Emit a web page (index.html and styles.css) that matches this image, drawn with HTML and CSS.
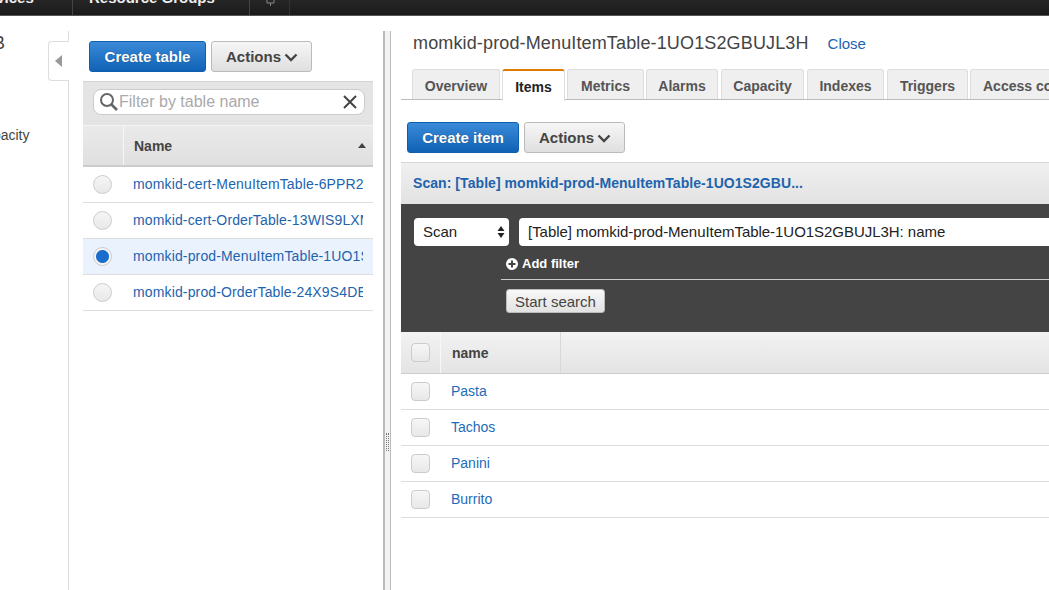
FILE: index.html
```html
<!DOCTYPE html>
<html lang="en">
<head>
    <meta charset="UTF-8">
    <title>DynamoDB</title>
    <link rel="stylesheet" href="styles.css">
</head>
<body>
<div class="topbar">
    <span class="topbar-item first">Services</span>
    <span class="topbar-item">Resource Groups</span>
    <span class="topbar-pin">
        <svg width="9" height="6" viewBox="0 0 9 6"><path d="M1 0v3h7V0M4.500 3v3" fill="none" stroke="#888"/></svg>
    </span>
</div>
<div class="main">
    <div class="nav">
        <div class="nav-db">DB</div>
        <div class="nav-cap">Capacity</div>
        <div class="collapse"><span class="collapse-arrow"></span></div>
    </div>

    <div class="tables">
        <div class="btn-row">
            <button class="btn btn-primary btn-table">Create table</button>
            <button class="btn btn-actions">Actions
                <svg class="chev" width="14" height="9" viewBox="0 0 14 9"><path d="M1.500 1.500L7 7l5.500-5.500" fill="none" stroke="#444" stroke-width="2.400"/></svg>
            </button>
        </div>
        <div class="filter-strip">
            <div class="filter">
                <svg class="search-icon" width="20" height="20" viewBox="0 0 20 20"><circle cx="8" cy="8" r="6" fill="none" stroke="#666" stroke-width="2"/><path d="M12.500 12.500L18 18" stroke="#666" stroke-width="2.600"/></svg>
                <span class="filter-text">Filter by table name</span>
                <svg class="clear-icon" width="14" height="14" viewBox="0 0 14 14"><path d="M1 1l12 12M13 1L1 13" stroke="#444" stroke-width="2"/></svg>
            </div>
        </div>
        <div class="tables-head">
            <div class="head-radio"></div>
            <div class="head-name">Name<span class="sort"></span></div>
        </div>
        <div class="table-row"><span class="radio"></span><a class="table-link">momkid-cert-MenuItemTable-6PPR2MFKJ3</a></div>
        <div class="table-row"><span class="radio"></span><a class="table-link">momkid-cert-OrderTable-13WIS9LXMPQ</a></div>
        <div class="table-row selected"><span class="radio checked"></span><a class="table-link">momkid-prod-MenuItemTable-1UO1S2GBUJL3H</a></div>
        <div class="table-row"><span class="radio"></span><a class="table-link">momkid-prod-OrderTable-24X9S4DEF7K</a></div>
    </div>

    <div class="splitter"><span class="grip"></span></div>

    <div class="detail">
        <div class="title-row">
            <span class="title">momkid-prod-MenuItemTable-1UO1S2GBUJL3H</span>
            <a class="close">Close</a>
        </div>
        <div class="tabs">
            <span class="tab t-overview">Overview</span>
            <span class="tab active t-items">Items</span>
            <span class="tab t-metrics">Metrics</span>
            <span class="tab t-alarms">Alarms</span>
            <span class="tab t-capacity">Capacity</span>
            <span class="tab t-indexes">Indexes</span>
            <span class="tab t-triggers">Triggers</span>
            <span class="tab t-access">Access control</span>
        </div>
        <div class="btn-row items-btns">
            <button class="btn btn-primary btn-item">Create item</button>
            <button class="btn btn-actions">Actions
                <svg class="chev" width="14" height="9" viewBox="0 0 14 9"><path d="M1.500 1.500L7 7l5.500-5.500" fill="none" stroke="#444" stroke-width="2.400"/></svg>
            </button>
        </div>
        <div class="scan-bar">Scan: [Table] momkid-prod-MenuItemTable-1UO1S2GBU...</div>
        <div class="scan-panel">
            <div class="scan-controls">
                <div class="select"><span class="select-text">Scan</span>
                    <svg width="8" height="14" viewBox="0 0 8 14"><path d="M4 1l3.500 5h-7zM4 13L.5 8h7z" fill="#222"/></svg>
                </div>
                <div class="scan-input">[Table] momkid-prod-MenuItemTable-1UO1S2GBUJL3H: name</div>
            </div>
            <div class="add-filter">
                <svg width="12" height="12" viewBox="0 0 12 12"><circle cx="6" cy="6" r="6" fill="#fff"/><path d="M6 2.500v7M2.500 6h7" stroke="#444" stroke-width="2"/></svg>
                Add filter
            </div>
            <div class="scan-start">
                <button class="btn-search">Start search</button>
            </div>
        </div>
        <div class="items-head">
            <div class="items-check"><span class="check"></span></div>
            <div class="items-name">name</div>
        </div>
        <div class="item-row"><div class="items-check"><span class="check"></span></div><a class="item-link">Pasta</a></div>
        <div class="item-row"><div class="items-check"><span class="check"></span></div><a class="item-link">Tachos</a></div>
        <div class="item-row"><div class="items-check"><span class="check"></span></div><a class="item-link">Panini</a></div>
        <div class="item-row"><div class="items-check"><span class="check"></span></div><a class="item-link">Burrito</a></div>
    </div>
</div>
</body>
</html>
```

FILE: styles.css
```css
* {
    padding: 0;
    margin: 0;
    box-sizing: border-box;
}

html, body {
    width: 1049px;
    height: 590px;
    overflow: hidden;
    background: #fff;
    font-family: "Liberation Sans", Arial, sans-serif;
    color: #444;
}

button {
    font-family: inherit;
}

/* top bar, cut off by the screenshot */
.topbar {
    height: 16px;
    background: linear-gradient(#262626, #1a1a1a);
    border-bottom: 1px solid #555;
    display: flex;
    align-items: flex-start;
    overflow: hidden;
    color: #eee;
    font-size: 15px;
    font-weight: bold;
}

.topbar-item {
    display: block;
    height: 29px;
    margin-top: -14px;
    line-height: 24px;
    padding: 0 34px 0 16px;
    border-right: 1px solid #444;
    white-space: nowrap;
}

.topbar-item.first {
    width: 73px;
    padding: 0;
    text-indent: -28px;
    overflow: hidden;
}

.topbar-pin {
    width: 40px;
    height: 15px;
    padding-left: 16px;
    border-right: 1px solid #333;
    line-height: 0;
}

.main {
    display: flex;
    height: 574px;
}

/* left nav */
.nav {
    width: 69px;
    flex: none;
    position: relative;
    margin-top: 15px;
    border-right: 1px solid #ddd;
    font-size: 14px;
    color: #444;
}

.nav-db {
    margin-left: -20px;
    font-size: 18px;
    line-height: 20px;
    margin-top: 2px;
}

.nav-cap {
    margin-left: -25px;
    line-height: 20px;
    margin-top: 72px;
}

.collapse {
    position: absolute;
    left: 48px;
    top: 10px;
    width: 21px;
    height: 40px;
    background: #fff;
    border: 1px solid #ddd;
    border-right: 0;
    border-radius: 4px 0 0 4px;
    display: flex;
    align-items: center;
    justify-content: center;
}

.collapse-arrow {
    border-right: 7px solid #999;
    border-top: 6px solid transparent;
    border-bottom: 6px solid transparent;
    margin-right: 2px;
}

/* tables pane */
.tables {
    width: 314px;
    flex: none;
    padding: 25px 10px 0 14px;
}

.btn-row {
    display: flex;
    gap: 5px;
    padding-left: 6px;
}

.btn {
    height: 31px;
    border-radius: 3px;
    font-size: 15px;
    font-weight: bold;
    display: flex;
    align-items: center;
    justify-content: center;
}

.btn-primary {
    color: #fff;
    background: linear-gradient(#3a8ad8, #0f62b5);
    border: 1px solid #0f5fae;
    text-shadow: 0 0 1px rgba(0, 0, 0, .4);
}

.btn-table {
    width: 117px;
}

.btn-item {
    width: 112px;
}

.btn-actions {
    width: 101px;
    padding-left: 1px;
    color: #444;
    background: linear-gradient(#f6f6f6, #dfdfdf);
    border: 1px solid #bbb;
    gap: 3px;
}

.chev {
    margin-top: 2px;
}

.filter-strip {
    height: 44px;
    margin-top: 9px;
    padding: 7px 8px 0 10px;
    background: #e4e4e4;
    border-top: 1px solid #d5d5d5;
}

.filter {
    height: 26px;
    background: #fff;
    border: 1px solid #ccc;
    border-radius: 8px;
    display: flex;
    align-items: center;
    padding: 0 7px 0 5px;
    font-size: 16px;
}

.search-icon {
    flex: none;
}

.filter-text {
    flex: 1;
    color: #aaa;
    margin-bottom: 1px;
}

.tables-head {
    height: 42px;
    display: flex;
    background: linear-gradient(#eaeaea, #e0e0e0);
    border-top: 1px solid #f4f4f4;
    border-bottom: 2px solid #ccc;
    font-size: 14px;
    font-weight: bold;
}

.head-radio {
    width: 41px;
    border-right: 1px solid #f6f6f6;
}

.head-name {
    flex: 1;
    display: flex;
    align-items: center;
    justify-content: space-between;
    padding: 0 7px 0 10px;
}

.sort {
    border-bottom: 5px solid #444;
    border-left: 4px solid transparent;
    border-right: 4px solid transparent;
}

.table-row {
    height: 36px;
    display: flex;
    align-items: center;
    border-bottom: 1px solid #ddd;
    padding-right: 10px;
}

.table-row.selected {
    background: #eaf3fd;
}

.radio {
    width: 19px;
    height: 19px;
    flex: none;
    margin: 0 21px 0 10px;
    border-radius: 50%;
    border: 1px solid #ccc;
    background: linear-gradient(#f6f6f6, #e8e8e8);
}

.radio.checked {
    background: radial-gradient(circle, #1a6ecb 0, #1a6ecb 6px, #f4f4f4 7px);
}

.table-link {
    font-size: 14px;
    letter-spacing: .14px;
    color: #1e63ad;
    white-space: nowrap;
    overflow: hidden;
    margin-bottom: 2px;
}

/* drag bar between the panes */
.splitter {
    width: 8px;
    flex: none;
    margin-top: 15px;
    background: #f2f2f2;
    border-left: 2px solid #bbb;
    border-right: 1px solid #bbb;
    position: relative;
}

.grip {
    position: absolute;
    left: 1px;
    top: 402px;
    height: 18px;
    width: 3px;
    border-left: 1px dotted #777;
    border-right: 1px dotted #777;
}

/* details pane */
.detail {
    flex: 1;
    min-width: 0;
    padding: 0 0 0 10px;
    overflow: hidden;
}

.title-row {
    height: 54px;
    display: flex;
    align-items: center;
    padding: 0 0 0 12px;
    margin-bottom: -1px;
    gap: 19px;
}

.title {
    font-size: 18px;
    letter-spacing: .14px;
    color: #444;
    white-space: nowrap;
}

.close {
    font-size: 15px;
    color: #1e63ad;
}

.tabs {
    height: 31px;
    display: flex;
    gap: 2px;
    padding-left: 11px;
    border-bottom: 1px solid #bbb;
    white-space: nowrap;
}

.tab {
    flex: none;
    height: 30px;
    text-align: center;
    font-size: 14px;
    font-weight: bold;
    line-height: 32px;
    color: #555;
    background: #efefef;
    border: 1px solid #ddd;
    border-bottom: 0;
    border-radius: 3px 3px 0 0;
}

.tab.active {
    height: 32px;
    color: #222;
    background: #fff;
    border-top: 2px solid #e07b00;
    border-bottom: 0;
    line-height: 33px;
}

.t-overview { width: 88px; }
.t-items { width: 63px; }
.t-metrics { width: 77px; }
.t-alarms { width: 72px; margin-right: 1px; }
.t-capacity { width: 83px; margin-right: 1px; }
.t-indexes { width: 77px; margin-right: 1px; }
.t-triggers { width: 81px; }
.t-access { width: 120px; text-align: left; padding-left: 12px; }

.items-btns {
    padding-left: 6px;
    padding-top: 22px;
    height: 62px;
}

.scan-bar {
    height: 42px;
    padding-left: 12px;
    background: linear-gradient(#f0f0f0, #e2e2e2);
    border-top: 1px solid #d5d5d5;
    font-size: 14px;
    letter-spacing: .06px;
    font-weight: bold;
    line-height: 41px;
    color: #1e63ad;
    white-space: nowrap;
}

.scan-panel {
    height: 128px;
    background: #444;
    padding-top: 14px;
}

.scan-controls {
    display: flex;
    gap: 10px;
    padding-left: 13px;
    height: 28px;
}

.select {
    width: 95px;
    flex: none;
    background: #fff;
    border-radius: 4px;
    display: flex;
    align-items: center;
    justify-content: space-between;
    padding: 0 4px 0 9px;
    font-size: 15px;
    color: #222;
}

.select-text {
    margin-bottom: 2px;
}

.scan-input {
    flex: 1;
    background: #fff;
    border-radius: 4px 0 0 4px;
    padding-left: 9px;
    font-size: 15px;
    letter-spacing: -.04px;
    line-height: 28px;
    color: #222;
    white-space: nowrap;
}

.add-filter {
    height: 34px;
    margin-left: 100px;
    padding: 2px 0 0 5px;
    border-bottom: 1px solid #ccc;
    display: flex;
    align-items: center;
    gap: 4px;
    font-size: 13px;
    font-weight: bold;
    color: #fff;
}

.scan-start {
    padding: 9px 0 0 105px;
}

.btn-search {
    width: 99px;
    height: 24px;
    padding-top: 1px;
    font-size: 15px;
    color: #444;
    background: linear-gradient(#f8f8f8, #e2e2e2);
    border: 1px solid #bbb;
    border-radius: 3px;
}

.items-head {
    height: 42px;
    display: flex;
    background: linear-gradient(#f2f2f2, #e4e4e4);
    border-bottom: 1px solid #ccc;
}

.items-check {
    width: 40px;
    flex: none;
    display: flex;
    align-items: center;
    padding-left: 10px;
}

.items-head .items-check {
    border-right: 1px solid #f8f8f8;
}

.items-name {
    width: 120px;
    padding-left: 11px;
    border-right: 1px solid #d8d8d8;
    font-size: 14px;
    font-weight: bold;
    line-height: 43px;
}

.check {
    width: 19px;
    height: 19px;
    border: 1px solid #ccc;
    border-radius: 4px;
    background: linear-gradient(#f6f6f6, #e8e8e8);
}

.item-row {
    height: 36px;
    display: flex;
    align-items: center;
    border-bottom: 1px solid #ddd;
}

.item-link {
    padding-left: 10px;
    font-size: 14px;
    color: #1e6bb8;
    margin-bottom: 2px;
}
```
